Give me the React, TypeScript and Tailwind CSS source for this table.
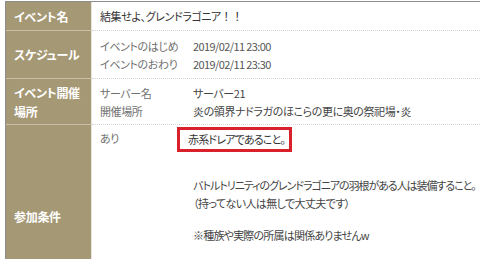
const font = "[font-family:'Noto_Sans_CJK_JP','Noto_Sans',sans-serif] [font-feature-settings:'palt']";

function Head({ children }: { children: React.ReactNode }) {
  return (
    <div className="flex w-[86px] shrink-0 flex-col justify-center border-b border-r border-b-[#c9bea3] border-r-[#e9e6df] bg-[#a59874] pl-[8px] text-[12px] font-bold leading-[19px] tracking-[-0.3px] text-white">
      {children}
    </div>
  );
}

function Line({ label, value, mono }: { label: string; value: string; mono?: boolean }) {
  return (
    <div className="flex whitespace-nowrap leading-[18px]">
      <span className="w-[93px] shrink-0 text-[#707070]">{label}</span>
      <span className={mono ? "tracking-[-0.6px] text-[#555]" : "text-[#444]"}>{value}</span>
    </div>
  );
}

export default function App() {
  return (
    <div className={`h-[259px] w-[480px] overflow-hidden bg-white pl-[5px] pt-px text-[11px] tracking-[-0.4px] ${font}`}>
      <div className="border-l border-t border-[#8c8c8c]">
        <div className="flex h-[29px]">
          <Head>イベント名</Head>
          <div className="flex flex-1 items-center border-b border-dotted border-[#d6d6d6] pl-[8px] text-[#333]">
            結集せよ、グレンドラゴニア<span className="tracking-normal [font-feature-settings:normal]">！！</span>
          </div>
        </div>

        <div className="flex h-[48px]">
          <Head>スケジュール</Head>
          <div className="flex flex-1 flex-col justify-center border-b border-dotted border-[#d6d6d6] pl-[8px]">
            <Line label="イベントのはじめ" value="2019/02/11 23:00" mono />
            <Line label="イベントのおわり" value="2019/02/11 23:30" mono />
          </div>
        </div>

        <div className="flex h-[46px]">
          <Head>
            <span>イベント開催</span>
            <span>場所</span>
          </Head>
          <div className="flex flex-1 flex-col justify-center border-b border-dotted border-[#d6d6d6] pl-[8px]">
            <Line label="サーバー名" value="サーバー21" />
            <Line label="開催場所" value="炎の領界ナドラガのほこらの更に奥の祭祀場・炎" />
          </div>
        </div>

        <div className="flex h-[184px]">
          <Head>参加条件</Head>
          <div className="flex flex-1 whitespace-nowrap pl-[8px] pt-[2px] leading-[18px]">
            <span className="w-[93px] shrink-0 pt-[2px] text-[#707070]">あり</span>
            <div className="text-[#444]">
              <div className="-ml-[16px] inline-block h-[25px] border-[3px] border-[#d8212b] pl-[8px] pr-[4px] leading-[19px] tracking-[-0.8px] text-[#333]">
                赤系ドレアであること。
              </div>
              <p className="mt-[24px] tracking-[-1.05px]">バトルトリニティのグレンドラゴニアの羽根がある人は装備すること。</p>
              <p className="tracking-[-0.6px]">（持ってない人は無しで大丈夫です）</p>
              <p className="mt-[14px] tracking-[-0.8px]">※種族や実際の所属は関係ありませんw</p>
            </div>
          </div>
        </div>
      </div>
    </div>
  );
}
